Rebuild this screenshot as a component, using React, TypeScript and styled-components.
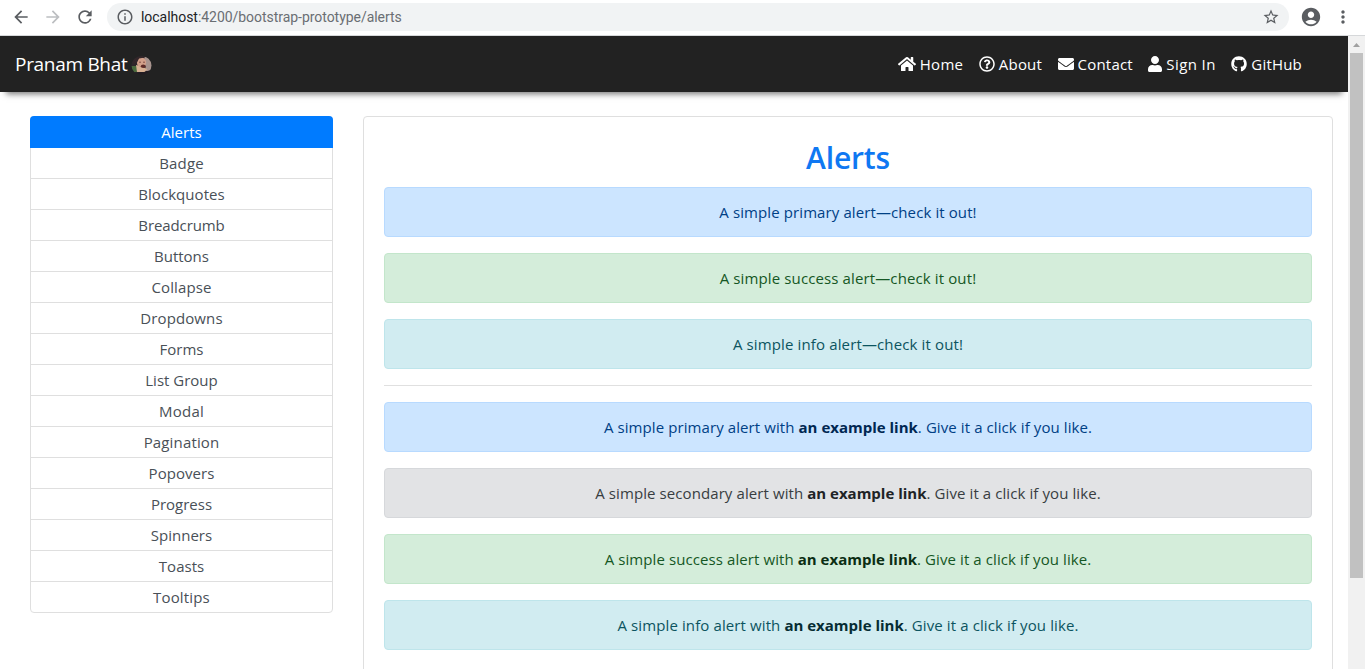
import React from 'react';
import styled, { createGlobalStyle, css } from 'styled-components';
import { MdArrowBack, MdArrowForward, MdRefresh, MdInfoOutline, MdStarBorder, MdAccountCircle, MdMoreVert } from 'react-icons/md';
import { FaHome, FaRegQuestionCircle, FaEnvelope, FaUser, FaGithub } from 'react-icons/fa';

const GlobalStyle = createGlobalStyle`
  * { box-sizing: border-box; }
  html, body { margin: 0; height: 100%; overflow: hidden; background: #fff; }
  body { font-family: "Open Sans", "Noto Sans", sans-serif; font-size: 15px; line-height: 24px; color: #212529; }
`;

const Window = styled.div`
  height: 669px;
  display: flex;
  flex-direction: column;
  overflow: hidden;
`;

const Toolbar = styled.div`
  height: 36px;
  flex: none;
  display: flex;
  align-items: center;
  padding: 0 12px 2px 11px;
  border-bottom: 1px solid #d6d8da;
  color: #5f6368;
`;

const ToolIcon = styled.span<{ $gap?: number; $faded?: boolean }>`
  display: flex;
  margin-right: ${p => p.$gap ?? 0}px;
  color: ${p => (p.$faded ? '#bcbec1' : '#5a5d61')};
`;

const AddressBar = styled.div`
  flex: 1;
  height: 28px;
  border-radius: 14px;
  background: #f1f3f4;
  display: flex;
  align-items: center;
  padding: 0 9px 0 9px;
  margin-right: 11px;
`;

const Url = styled.span`
  flex: 1;
  margin-left: 7px;
  font: 14px/20px Roboto, sans-serif;
  letter-spacing: -0.04px;
  color: #6a6e73;
  b { font-weight: 400; color: #202124; }
`;

const Viewport = styled.div`
  flex: 1;
  min-height: 0;
  display: flex;
`;

const Page = styled.div`
  flex: 1;
  display: flex;
  flex-direction: column;
  overflow: hidden;
`;

const Navbar = styled.nav`
  height: 56px;
  flex: none;
  display: flex;
  align-items: center;
  justify-content: space-between;
  padding: 0 46px 0 15px;
  background: #222;
  color: #fff;
  box-shadow: 0 8px 6px -6px #777;
`;

const Brand = styled.div`
  display: flex;
  align-items: center;
  gap: 4px;
  font-size: 19px;
  line-height: 30px;
  letter-spacing: -0.3px;
  svg { display: block; margin-top: 3px; }
`;

const NavLinks = styled.div`
  display: flex;
  gap: 15.5px;
`;

const NavLink = styled.a<{ $spacing: number; $icon: number }>`
  display: flex;
  align-items: center;
  gap: 4px;
  letter-spacing: ${p => p.$spacing}px;
  svg { width: ${p => p.$icon}px; height: 16px; }
`;

const Content = styled.div`
  flex: 1;
  min-height: 0;
  display: flex;
  align-items: flex-start;
  gap: 30px;
  padding: 24px 15px 0 30px;
`;

const Menu = styled.div`
  width: 303px;
  flex: none;
  border: 1px solid #dfdfdf;
  border-radius: 4px;
`;

const MenuItem = styled.div<{ $active?: boolean; $spacing: number }>`
  height: 31px;
  line-height: 30px;
  text-align: center;
  letter-spacing: ${p => p.$spacing}px;
  color: #495057;
  border-bottom: 1px solid #dfdfdf;
  &:last-child { height: 30px; border-bottom: 0; }
  ${p => p.$active && css`
    margin: -1px -1px 0;
    height: 32px;
    line-height: 32px;
    background: #007bff;
    border-color: #007bff;
    border-radius: 4px 4px 0 0;
    color: #fff;
  `}
`;

const Card = styled.main`
  flex: 1;
  height: 760px;
  padding: 20px;
  border: 1px solid #dfdfdf;
  border-radius: 4px;
`;

const Title = styled.h2`
  margin: 0 0 8px;
  font-size: 30px;
  line-height: 42px;
  font-weight: 600;
  letter-spacing: -0.15px;
  text-align: center;
  color: #0f78f2;
`;

const tones = {
  primary: ['#cce5ff', '#b8daff', '#004085', '#002752'],
  secondary: ['#e2e3e5', '#d6d8db', '#383d41', '#202326'],
  success: ['#d4edda', '#c3e6cb', '#155724', '#0b2e13'],
  info: ['#d1ecf1', '#bee5eb', '#0c5460', '#062c33'],
};
type Tone = keyof typeof tones;

const Alert = styled.div<{ $tone: Tone; $spacing: number }>`
  height: 50px;
  margin-bottom: 16px;
  padding: 12px 20px;
  text-align: center;
  letter-spacing: ${p => p.$spacing}px;
  background: ${p => tones[p.$tone][0]};
  border: 1px solid ${p => tones[p.$tone][1]};
  border-radius: 4px;
  color: ${p => tones[p.$tone][2]};
  b { font-weight: 700; letter-spacing: 0; color: ${p => tones[p.$tone][3]}; }
`;

const Divider = styled.hr`
  margin: 16px 0;
  border: 0;
  border-top: 1px solid #e0e0e0;
`;

const Scrollbar = styled.div`
  width: 17px;
  flex: none;
  display: flex;
  flex-direction: column;
  align-items: center;
  background: #f1f1f1;
`;

const ScrollArrow = styled.div`
  height: 17px;
  display: flex;
  align-items: center;
`;

const Thumb = styled.div`
  width: 13px;
  height: 525px;
  background: #c1c1c1;
`;

const Avatar = () => (
  <svg width="21" height="20" viewBox="0 0 21 20">
    <defs>
      <clipPath id="face"><ellipse cx="10.5" cy="9.5" rx="10" ry="9.5" /></clipPath>
      <filter id="soft"><feGaussianBlur stdDeviation="0.6" /></filter>
    </defs>
    <g clipPath="url(#face)">
      <g filter="url(#soft)">
        <rect width="21" height="20" fill="#2f2529" />
        <path d="M0 10h6v6H0z" fill="#4a6a3e" />
        <path d="M13 1h8v14h-6z" fill="#a8948e" />
        <path d="M5 9l5 1 6 3-2 3-8 0z" fill="#d8b193" />
        <ellipse cx="10.5" cy="6.5" rx="4.6" ry="5" fill="#d3a08a" />
        <path d="M8 6.2h2M12 6.2h2" stroke="#7a4a40" strokeWidth="0.9" />
        <ellipse cx="12.2" cy="10.2" rx="2.4" ry="1.8" fill="#5e2c27" />
        <path d="M3 0h12l-1 1.6-6 .8-2 4-4 2z" fill="#33262a" />
        <path d="M4 16.5l9-.5 7-2v6H4z" fill="#211e24" />
      </g>
    </g>
  </svg>
);

const links = [
  { icon: <FaHome />, label: 'Home', size: 18, spacing: 0.3 },
  { icon: <FaRegQuestionCircle />, label: 'About', size: 16, spacing: 0.2 },
  { icon: <FaEnvelope />, label: 'Contact', size: 16, spacing: 0.2 },
  { icon: <FaUser />, label: 'Sign In', size: 14, spacing: 0.4 },
  { icon: <FaGithub />, label: 'GitHub', size: 16, spacing: 0.2 },
];

const items: [string, number][] = [
  ['Alerts', 0], ['Badge', 0.15], ['Blockquotes', 0.05], ['Breadcrumb', -0.1],
  ['Buttons', 0], ['Collapse', 0.1], ['Dropdowns', 0.1], ['Forms', 0],
  ['List Group', 0], ['Modal', 0.25], ['Pagination', 0.15], ['Popovers', 0.05],
  ['Progress', 0], ['Spinners', 0], ['Toasts', 0], ['Tooltips', 0.15],
];

const simpleAlerts: [Tone, number][] = [['primary', 0.1], ['success', 0.12], ['info', 0.13]];
const linkAlerts: [Tone, number][] = [['primary', 0.09], ['secondary', 0.09], ['success', 0.09], ['info', 0.11]];

export default function App() {
  return (
    <>
      <GlobalStyle />
      <Window>
        <Toolbar>
          <ToolIcon $gap={12}><MdArrowBack size={20} /></ToolIcon>
          <ToolIcon $gap={12} $faded><MdArrowForward size={20} /></ToolIcon>
          <ToolIcon $gap={12}><MdRefresh size={20} /></ToolIcon>
          <AddressBar>
            <ToolIcon><MdInfoOutline size={18} /></ToolIcon>
            <Url><b>localhost</b>:4200/bootstrap-prototype/alerts</Url>
            <ToolIcon><MdStarBorder size={18} /></ToolIcon>
          </AddressBar>
          <ToolIcon $gap={11}><MdAccountCircle size={22} /></ToolIcon>
          <ToolIcon><MdMoreVert size={20} /></ToolIcon>
        </Toolbar>
        <Viewport>
          <Page>
            <Navbar>
              <Brand>Pranam Bhat<Avatar /></Brand>
              <NavLinks>
                {links.map(l => (
                  <NavLink key={l.label} $icon={l.size} $spacing={l.spacing}>{l.icon}{l.label}</NavLink>
                ))}
              </NavLinks>
            </Navbar>
            <Content>
              <Menu>
                {items.map(([name, spacing], i) => (
                  <MenuItem key={name} $active={i === 0} $spacing={spacing}>{name}</MenuItem>
                ))}
              </Menu>
              <Card>
                <Title>Alerts</Title>
                {simpleAlerts.map(([tone, spacing]) => (
                  <Alert key={tone} $tone={tone} $spacing={spacing}>A simple {tone} alert—check it out!</Alert>
                ))}
                <Divider />
                {linkAlerts.map(([tone, spacing]) => (
                  <Alert key={tone} $tone={tone} $spacing={spacing}>
                    A simple {tone} alert with <b>an example link</b>. Give it a click if you like.
                  </Alert>
                ))}
              </Card>
            </Content>
          </Page>
          <Scrollbar>
            <ScrollArrow>
              <svg width="7" height="4" viewBox="0 0 7 4"><path d="M3.5 0L7 4H0z" fill="#a0a0a0" /></svg>
            </ScrollArrow>
            <Thumb />
          </Scrollbar>
        </Viewport>
      </Window>
    </>
  );
}
